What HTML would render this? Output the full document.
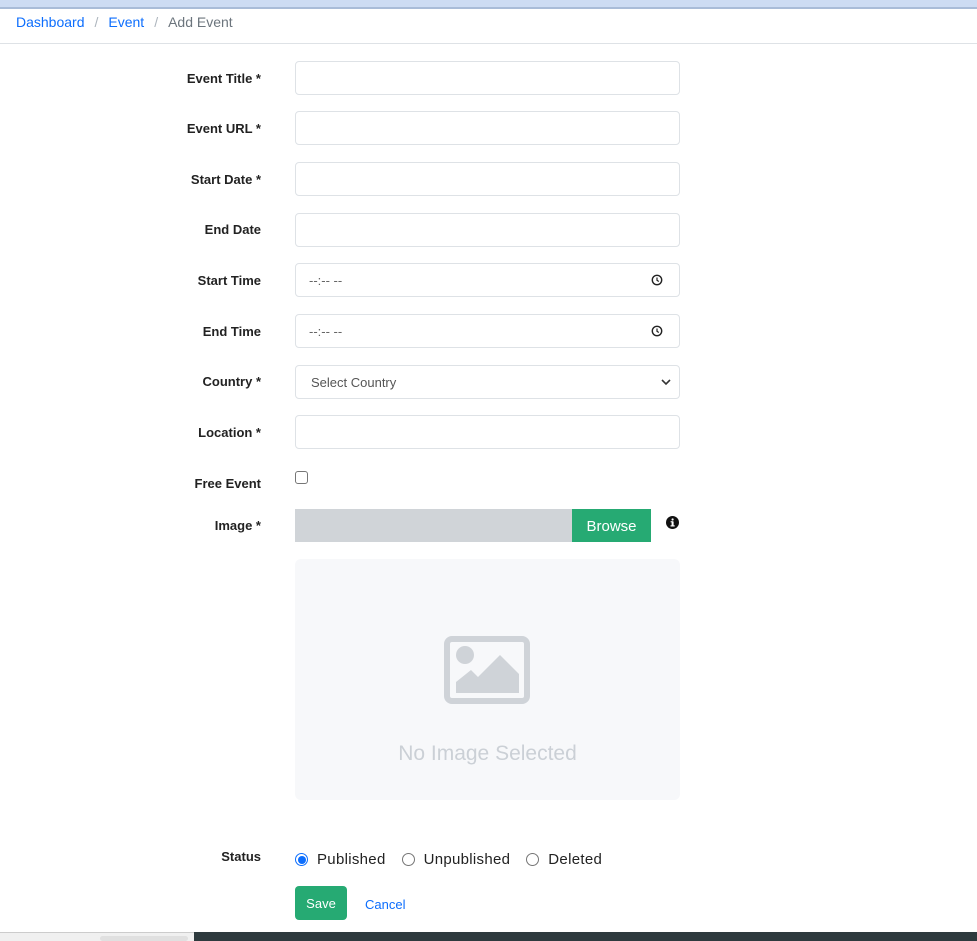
<!DOCTYPE html>
<html><head><meta charset="utf-8"><style>
*{box-sizing:border-box;margin:0;padding:0}
body{width:977px;height:941px;overflow:hidden;background:#fff;font-family:"Liberation Sans",sans-serif;position:relative;color:#212529}
.a{position:absolute}
.lbl{position:absolute;right:716px;font-size:13px;font-weight:bold;color:#222;text-align:right;white-space:nowrap}
.in{position:absolute;left:295px;width:385px;height:34px;border:1px solid #dee2e6;border-radius:4px;background:#fff;font-size:13px;color:#555}
</style></head><body>
<div class="a" style="left:0;top:0;width:977px;height:9px;background:#cddcf3;border-bottom:2px solid #a9bcd8"></div>
<div class="a" style="left:16px;top:14px;font-size:14px;color:#6c757d;white-space:nowrap"><span style="color:#0d6efd">Dashboard</span><span style="padding:0 10px;color:#adb5bd">/</span><span style="color:#0d6efd">Event</span><span style="padding:0 10px;color:#adb5bd">/</span>Add Event</div>
<div class="a" style="left:0;top:43px;width:977px;height:1px;background:#dee2e6"></div>

<div class="lbl" style="top:71px">Event Title *</div><div class="in" style="top:61px"></div>
<div class="lbl" style="top:121px">Event URL *</div><div class="in" style="top:111px"></div>
<div class="lbl" style="top:172px">Start Date *</div><div class="in" style="top:162px"></div>
<div class="lbl" style="top:222px">End Date</div><div class="in" style="top:213px"></div>
<div class="lbl" style="top:273px">Start Time</div><div class="in" style="top:263px;padding:9px 0 0 13px;color:#666">--:-- --<svg class="a" style="right:16px;top:10px" width="12" height="12" viewBox="0 0 12 12"><circle cx="6" cy="6" r="4.7" fill="none" stroke="#222" stroke-width="1.4"/><path d="M6 3.5V6.3L7.8 7.5" fill="none" stroke="#222" stroke-width="1.2"/></svg></div>
<div class="lbl" style="top:324px">End Time</div><div class="in" style="top:314px;padding:9px 0 0 13px;color:#666">--:-- --<svg class="a" style="right:16px;top:10px" width="12" height="12" viewBox="0 0 12 12"><circle cx="6" cy="6" r="4.7" fill="none" stroke="#222" stroke-width="1.4"/><path d="M6 3.5V6.3L7.8 7.5" fill="none" stroke="#222" stroke-width="1.2"/></svg></div>
<div class="lbl" style="top:374px">Country *</div><div class="in" style="top:365px;padding:9px 0 0 15px">Select Country<svg class="a" style="right:8px;top:12px" width="10" height="8" viewBox="0 0 10 8"><path d="M1 2L5 6L9 2" fill="none" stroke="#333" stroke-width="1.6"/></svg></div>
<div class="lbl" style="top:425px">Location *</div><div class="in" style="top:415px"></div>
<div class="lbl" style="top:476px">Free Event</div>
<div class="a" style="left:295px;top:471px;width:13px;height:13px;border:1px solid #767676;border-radius:3px"></div>
<div class="lbl" style="top:518px">Image *</div>
<div class="a" style="left:295px;top:509px;width:277px;height:33px;background:#d0d4d8"></div>
<div class="a" style="left:572px;top:509px;width:79px;height:33px;background:#26aa73;color:#fff;font-size:15px;text-align:center;line-height:35px">Browse</div>
<svg class="a" style="left:666px;top:516px" width="13" height="13" viewBox="0 0 13 13"><circle cx="6.5" cy="6.5" r="6.5" fill="#111"/><rect x="5.6" y="5.5" width="2" height="4.5" fill="#fff"/><rect x="4.5" y="9.3" width="4.2" height="1.2" fill="#fff"/><rect x="4.6" y="5.2" width="2.5" height="1.1" fill="#fff"/><circle cx="6.6" cy="3.5" r="1.1" fill="#fff"/></svg>
<div class="a" style="left:295px;top:559px;width:385px;height:241px;background:#f7f8fa;border-radius:6px"></div>
<svg class="a" style="left:444px;top:636px" width="86" height="68" viewBox="0 0 86 68"><rect x="3" y="3" width="80" height="62" rx="5" fill="none" stroke="#cfd3d8" stroke-width="6"/><circle cx="21" cy="19" r="9" fill="#cfd3d8"/><path d="M12 57V46L27 34L34 41L56 19L75 38V57Z" fill="#cfd3d8"/></svg>
<div class="a" style="left:295px;top:742px;width:385px;text-align:center;font-size:21px;color:#cbd0d6">No Image Selected</div>

<div class="lbl" style="top:849px">Status</div>
<div class="a" style="left:295px;top:851px;font-size:15px;color:#222;white-space:nowrap;display:flex;align-items:center">
<span style="width:13px;height:13px;border-radius:50%;border:1px solid #0d6efd;display:inline-flex;align-items:center;justify-content:center"><span style="width:8px;height:8px;border-radius:50%;background:#0d6efd"></span></span><span style="margin:0 16px 0 9px;letter-spacing:0.3px">Published</span>
<span style="width:13px;height:13px;border-radius:50%;border:1px solid #767676"></span><span style="margin:0 16px 0 9px;letter-spacing:0.3px">Unpublished</span>
<span style="width:13px;height:13px;border-radius:50%;border:1px solid #767676"></span><span style="margin-left:9px;letter-spacing:0.3px">Deleted</span></div>
<div class="a" style="left:295px;top:886px;width:52px;height:34px;background:#26aa73;border-radius:4px;color:#fff;font-size:13px;text-align:center;line-height:36px">Save</div>
<div class="a" style="left:365px;top:897px;font-size:13px;color:#0d6efd">Cancel</div>
<div class="a" style="left:0;top:932px;width:194px;height:9px;background:#f0f0f0;border-top:1px solid #ccc"></div>
<div class="a" style="left:100px;top:936px;width:88px;height:5px;background:#e0e0e0;border-radius:3px"></div>
<div class="a" style="left:194px;top:932px;width:783px;height:9px;background:#2e3a3e"></div>
</body></html>
